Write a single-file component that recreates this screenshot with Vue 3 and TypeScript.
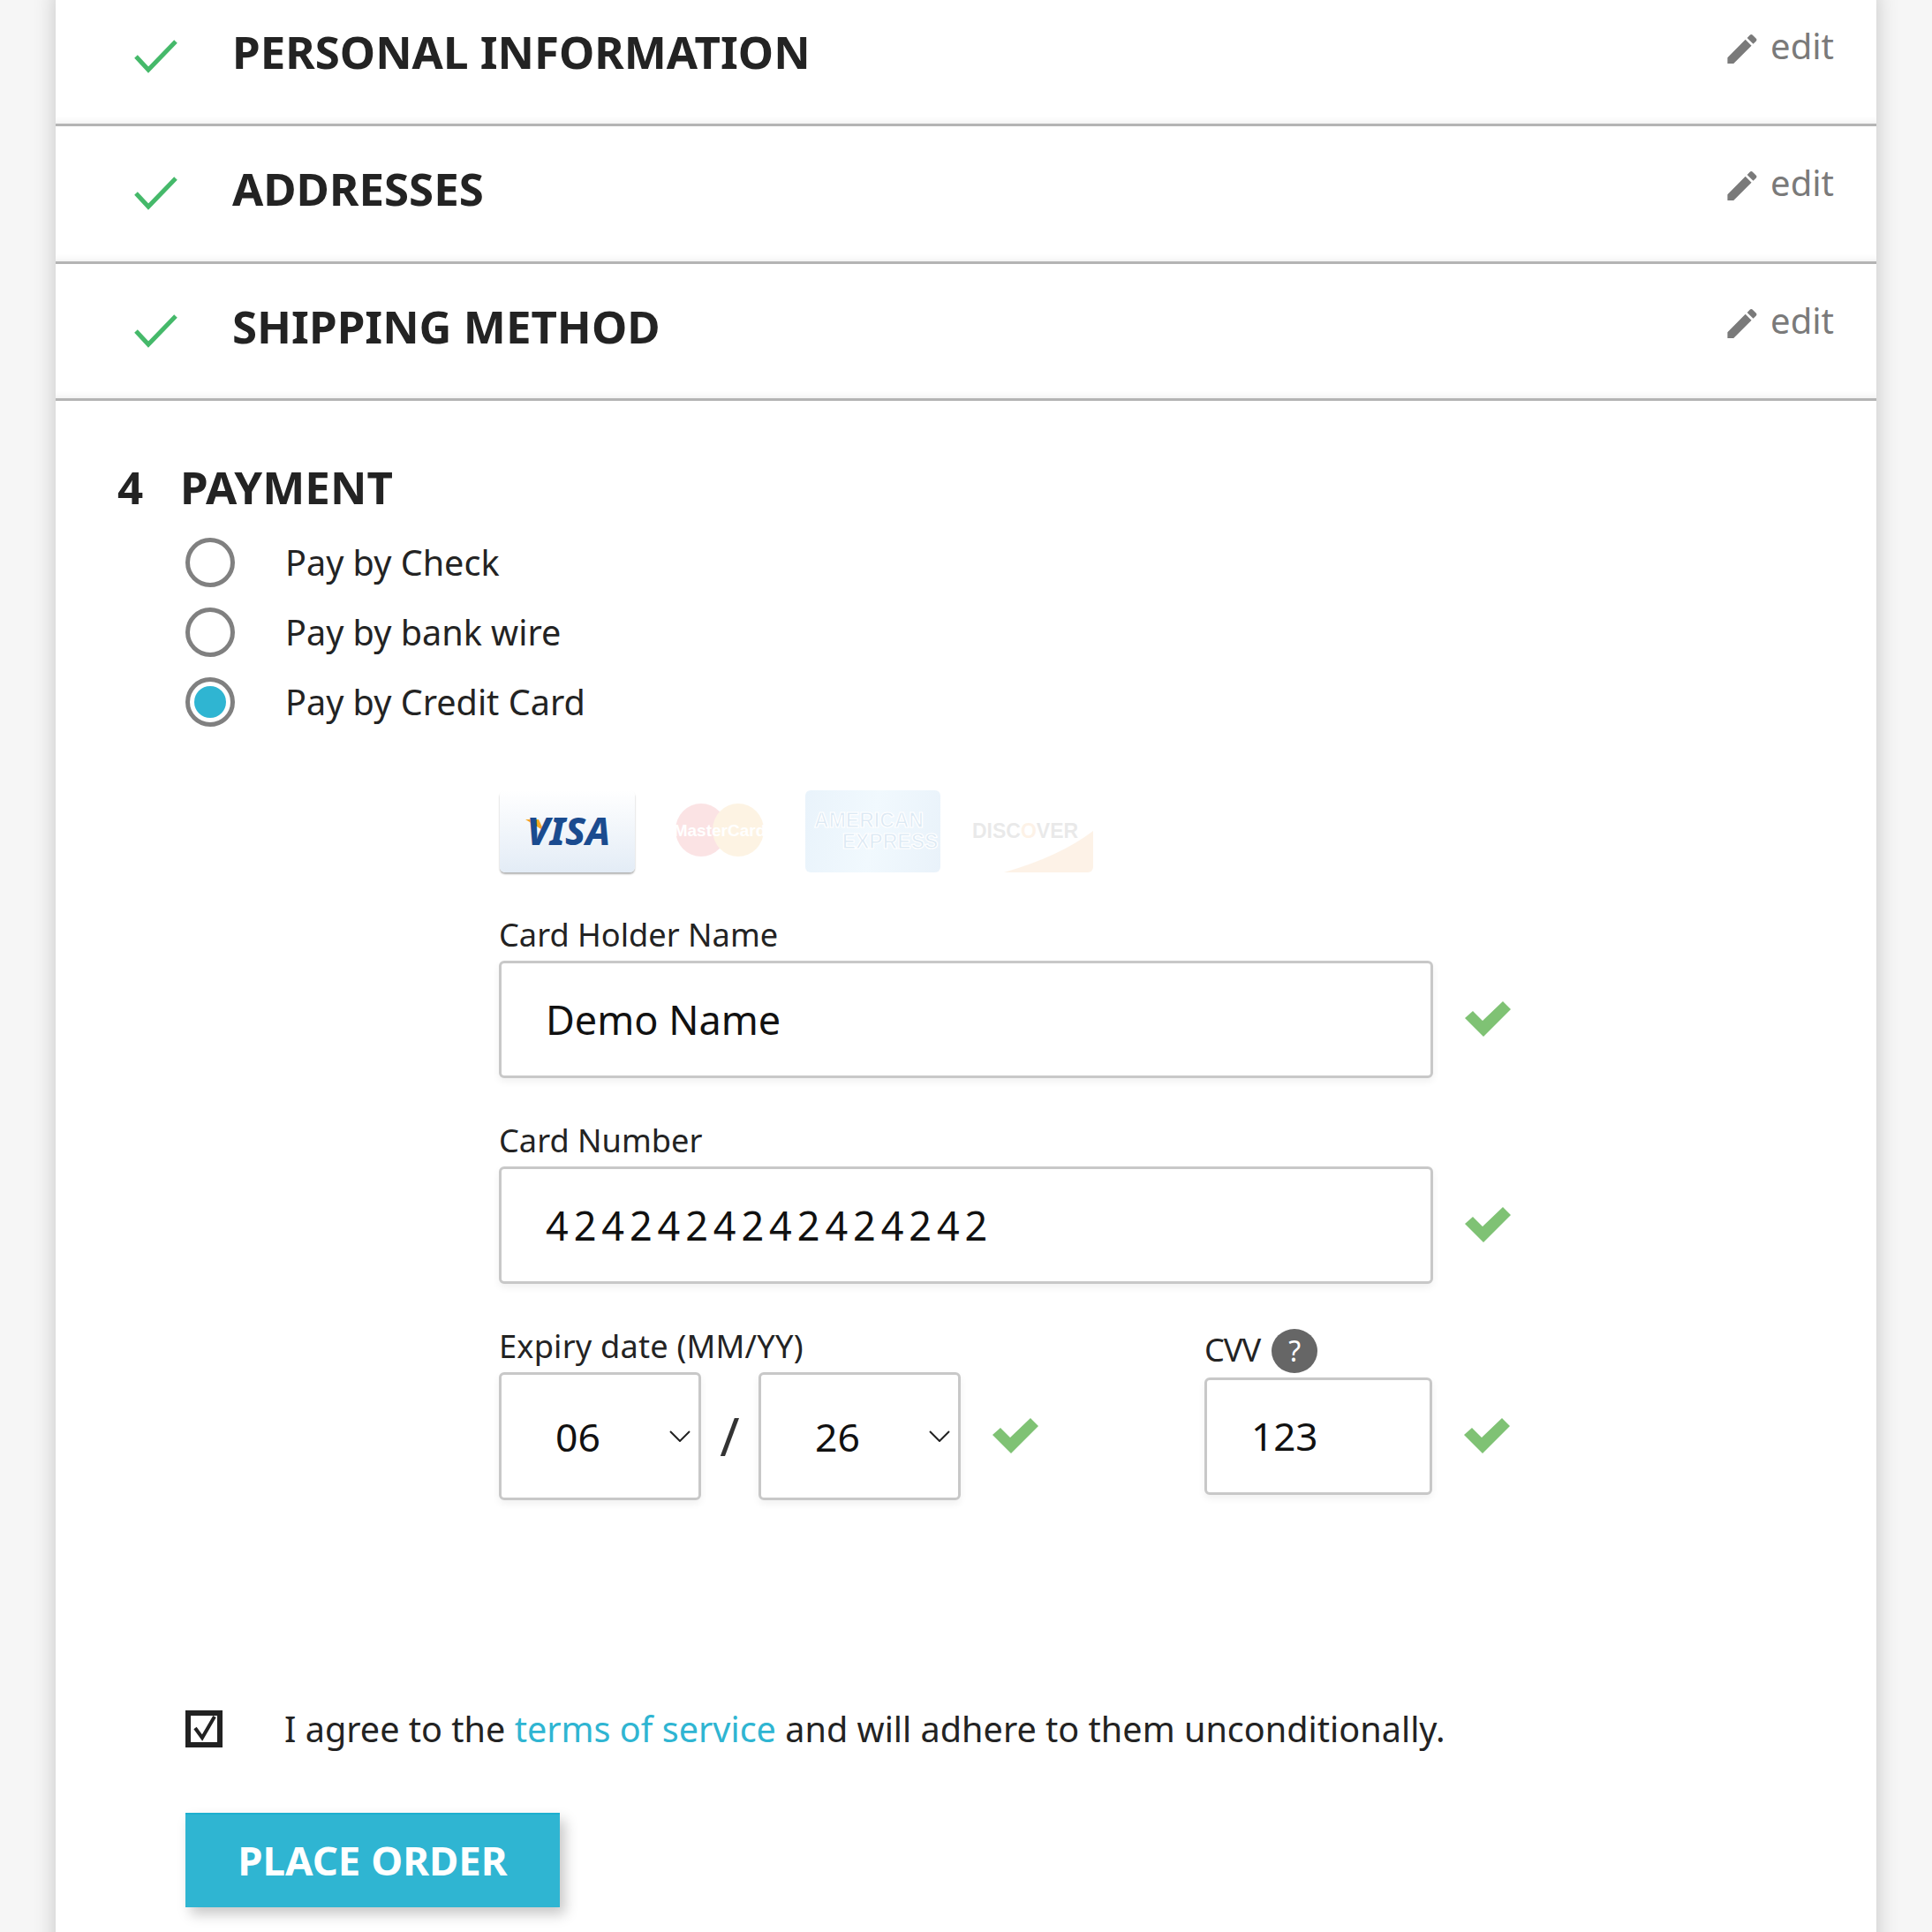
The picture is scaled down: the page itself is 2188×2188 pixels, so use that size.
<script setup lang="ts">
const doneSteps = ['PERSONAL INFORMATION', 'ADDRESSES', 'SHIPPING METHOD'];

const paymentOptions = [
  { label: 'Pay by Check', selected: false },
  { label: 'Pay by bank wire', selected: false },
  { label: 'Pay by Credit Card', selected: true }
];
</script>

<template>
  <div class="page">
    <div class="card">
      <!-- finished steps -->
      <div v-for="step in doneSteps" :key="step" class="step">
        <svg class="step-check" viewBox="0 0 50 38" width="50" height="38">
          <path d="M2 19 L16 34 L47 2" fill="none" stroke="#45b96a" stroke-width="5" />
        </svg>
        <h2 class="step-title">{{ step }}</h2>
        <span class="step-edit">
          <svg class="pencil" viewBox="3 3 18.1 18" width="34" height="33">
            <path fill="#7a7a7a" d="M3 17.25V21h3.75L17.81 9.94l-3.75-3.75L3 17.25zM20.71 7.04c.39-.39.39-1.02 0-1.41l-2.34-2.34c-.39-.39-1.02-.39-1.41 0l-1.83 1.83 3.75 3.75 1.83-1.83z" />
          </svg>
          edit
        </span>
      </div>

      <section class="payment">
        <h2 class="payment-title"><span class="step-number">4</span>PAYMENT</h2>

        <div class="options">
          <label v-for="opt in paymentOptions" :key="opt.label" class="option">
            <span class="radio" :class="{ on: opt.selected }"></span>
            {{ opt.label }}
          </label>
        </div>

        <div class="form">
          <div class="logos">
            <svg class="logo visa" viewBox="0 0 153 93" width="153" height="93">
              <path fill="#f5a623" d="M29 33h15l6 13z" />
              <text x="78" y="62" text-anchor="middle" class="visa-text">VISA</text>
            </svg>
            <svg class="logo faded" viewBox="0 0 153 93" width="153" height="93">
              <ellipse cx="55" cy="45" rx="29" ry="30" fill="#e2222e" />
              <ellipse cx="97" cy="45" rx="29" ry="30" fill="#f5a623" />
              <text x="76" y="52" text-anchor="middle" class="mc-text">MasterCard</text>
            </svg>
            <svg class="logo amex" viewBox="0 0 153 93" width="153" height="93">
              <text x="72" y="42" text-anchor="middle" class="amex-text">AMERICAN</text>
              <text x="96" y="66" text-anchor="middle" class="amex-text">EXPRESS</text>
            </svg>
            <svg class="logo faded disc" viewBox="0 0 153 93" width="153" height="93">
              <path fill="#f08a24" d="M52 93 Q115 75 153 46 V93z" />
              <text x="16" y="54" class="disc-text">DISC<tspan fill="#f08a24">O</tspan>VER</text>
            </svg>
          </div>

          <div class="field">
            <label class="field-label">Card Holder Name</label>
            <div class="field-row">
              <input class="input wide" value="Demo Name" readonly />
              <svg class="ok" viewBox="0 0 52 40" width="52" height="40"><path d="M0 19 L9 11 L20 22 L43 0 L52 9 L21 40z" /></svg>
            </div>
          </div>

          <div class="field">
            <label class="field-label">Card Number</label>
            <div class="field-row">
              <input class="input wide number" value="4242424242424242" readonly />
              <svg class="ok" viewBox="0 0 52 40" width="52" height="40"><path d="M0 19 L9 11 L20 22 L43 0 L52 9 L21 40z" /></svg>
            </div>
          </div>

          <div class="split">
            <div class="expiry">
              <label class="field-label expiry-label">Expiry date (MM/YY)</label>
              <div class="field-row expiry-row">
                <div class="select-box">
                  <span>06</span>
                  <svg class="chevron" viewBox="0 0 24 13" width="24" height="13"><path d="M1 1 L12 12 L23 1" fill="none" stroke="#222" stroke-width="2" /></svg>
                </div>
                <span class="slash">/</span>
                <div class="select-box">
                  <span>26</span>
                  <svg class="chevron" viewBox="0 0 24 13" width="24" height="13"><path d="M1 1 L12 12 L23 1" fill="none" stroke="#222" stroke-width="2" /></svg>
                </div>
                <svg class="ok ok-expiry" viewBox="0 0 52 40" width="52" height="40"><path d="M0 19 L9 11 L20 22 L43 0 L52 9 L21 40z" /></svg>
              </div>
            </div>
            <div class="cvv">
              <div class="cvv-label">
                <label class="field-label tight">CVV</label>
                <span class="help">?</span>
              </div>
              <div class="field-row">
                <input class="input short" value="123" readonly />
                <svg class="ok" viewBox="0 0 52 40" width="52" height="40"><path d="M0 19 L9 11 L20 22 L43 0 L52 9 L21 40z" /></svg>
              </div>
            </div>
          </div>
        </div>

        <div class="terms">
          <span class="checkbox">
            <svg viewBox="0 0 30 30" width="30" height="30"><path d="M5 14 L13 25 L27 1" fill="none" stroke="#222" stroke-width="4" /></svg>
          </span>
          <span>I agree to the <a class="link">terms of service</a> and will adhere to them unconditionally.</span>
        </div>

        <button class="place-order">PLACE ORDER</button>
      </section>
    </div>
  </div>
</template>

<style>
html,
body {
  margin: 0;
  background: #f6f6f6;
}
</style>

<style scoped>
.page {
  height: 2188px;
  overflow: hidden;
  background: #f6f6f6;
  font-family: "Noto Sans", sans-serif;
  color: #232323;
}

.card {
  margin: -12px 63px 0;
  height: 2300px;
  background: #fff;
  box-shadow: 0 0 24px rgba(0, 0, 0, 0.2);
}

.step {
  box-sizing: border-box;
  height: 155.33px;
  display: flex;
  align-items: flex-start;
  padding: 40px 48px 0 89px;
  border-bottom: 3px solid #b4b4b4;
  box-shadow: inset 0 -12px 10px -12px rgba(0, 0, 0, 0.1);
}

.step-check {
  margin-top: 17px;
  flex: none;
}

.step-title {
  margin: 0 0 0 61px;
  font-size: 51px;
  line-height: 60px;
  font-weight: 700;
}

.step-edit {
  margin-left: auto;
  display: flex;
  align-items: flex-start;
  gap: 15px;
  font-size: 40px;
  line-height: 54px;
  color: #7a7a7a;
  margin-top: -3px;
}

.pencil {
  margin-top: 14px;
  margin-left: 1px;
}

.payment {
  padding: 67px 0 0 70px;
}

.payment-title {
  margin: 0;
  font-size: 51px;
  line-height: 60px;
  font-weight: 700;
  display: flex;
}

.step-number {
  width: 71px;
}

.options {
  margin: 28px 0 0 77px;
  display: flex;
  flex-direction: column;
  gap: 23px;
}

.option {
  display: flex;
  align-items: center;
  gap: 57px;
  font-size: 39.6px;
  line-height: 56px;
}

.radio {
  box-sizing: border-box;
  width: 56px;
  height: 56px;
  border-radius: 50%;
  border: 5px solid #808080;
  display: flex;
  align-items: center;
  justify-content: center;
}

.radio.on::after {
  content: "";
  width: 36px;
  height: 36px;
  border-radius: 50%;
  background: #2fb5d2;
}

.form {
  margin: 72px 0 0 432px;
  width: 1150px;
}

.logos {
  display: flex;
  gap: 20px;
  margin: 0 0 48px 1px;
}

.logo {
  display: block;
  border-radius: 6px;
}

.visa {
  background: linear-gradient(#fff, #e3ecf6);
  box-shadow: 0 2px 2px rgba(0, 0, 0, 0.3);
}

.visa-text {
  font-family: "Noto Sans", sans-serif;
  font-size: 43px;
  font-weight: 800;
  font-style: italic;
  fill: #1a4b8f;
}

.faded {
  opacity: 0.12;
}

.disc {
  opacity: 0.1;
}

.mc-text {
  font-family: "Liberation Sans", sans-serif;
  font-size: 19px;
  font-weight: 700;
  fill: #fff;
}

.amex {
  background: linear-gradient(100deg, #e9f3fb, #f1f9fe 50%, #e9f2fa);
}

.amex-text {
  font-family: "Liberation Sans", sans-serif;
  font-size: 23px;
  font-weight: 700;
  fill: #dce9f4;
  stroke: #fff;
  stroke-width: 1.2px;
}

.disc-text {
  font-family: "Liberation Sans", sans-serif;
  font-size: 23px;
  font-weight: 700;
  fill: #333;
}

.field {
  margin-bottom: 48px;
}

.field-label {
  display: block;
  font-size: 36.2px;
  line-height: 44px;
  color: #232323;
}

.expiry-label {
  letter-spacing: 0.2px;
}

.tight {
  letter-spacing: -1px;
  margin-bottom: 3px;
}

.field-row {
  display: flex;
  align-items: center;
  gap: 36px;
  margin-top: 8px;
}

.input {
  box-sizing: border-box;
  height: 133px;
  border: 3px solid #c8c8c8;
  border-radius: 6px;
  background: #fff;
  box-shadow: 0 4px 8px rgba(0, 0, 0, 0.06);
  font-family: "Noto Sans", sans-serif;
  font-size: 45px;
  color: #111;
  padding: 0 0 0 50px;
  outline: none;
}

.wide {
  width: 1058px;
}

.number {
  letter-spacing: 5.9px;
}

.short {
  width: 258px;
  font-size: 44px;
}

.ok {
  flex: none;
  fill: #7fc274;
}

.split {
  display: flex;
}

.expiry {
  width: 799px;
}

.expiry-row {
  gap: 0;
  margin-top: 8px;
}

.select-box {
  box-sizing: border-box;
  position: relative;
  width: 229px;
  height: 145px;
  border: 3px solid #c8c8c8;
  border-radius: 6px;
  box-shadow: 0 4px 8px rgba(0, 0, 0, 0.06);
  font-size: 44.5px;
  color: #111;
  padding-left: 61px;
  display: flex;
  align-items: center;
}

.chevron {
  position: absolute;
  right: 9px;
  top: 63px;
}

.slash {
  width: 65px;
  text-align: center;
  font-size: 60px;
  line-height: 60px;
  font-weight: 400;
  color: #333;
}

.ok-expiry {
  margin-left: 36px;
}

.cvv {
  padding-top: 3px;
}

.cvv-label {
  display: flex;
  align-items: center;
  gap: 13px;
  height: 50px;
}

.cvv .field-row {
  margin-top: 5px;
}

.help {
  width: 52px;
  height: 50px;
  border-radius: 50%;
  background: #666;
  color: #fff;
  font-size: 32px;
  display: flex;
  align-items: center;
  justify-content: center;
}

.terms {
  margin: 231px 0 0 77px;
  display: flex;
  align-items: center;
  gap: 70px;
  font-size: 39.6px;
  line-height: 56px;
}

.checkbox {
  box-sizing: border-box;
  width: 42px;
  height: 42px;
  border: 6px solid #222;
  display: flex;
  align-items: center;
  justify-content: center;
}

.link {
  color: #2fb5d2;
}

.place-order {
  display: block;
  margin: 67px 0 0 77px;
  width: 424px;
  height: 107px;
  border: none;
  border-top: 2px solid #1db0cf;
  padding: 0 0 3px;
  background: #2fb5d2;
  color: #fff;
  font-family: "Noto Sans", sans-serif;
  font-size: 45.5px;
  font-weight: 700;
  box-shadow: 6px 8px 14px rgba(0, 0, 0, 0.22);
}
</style>
